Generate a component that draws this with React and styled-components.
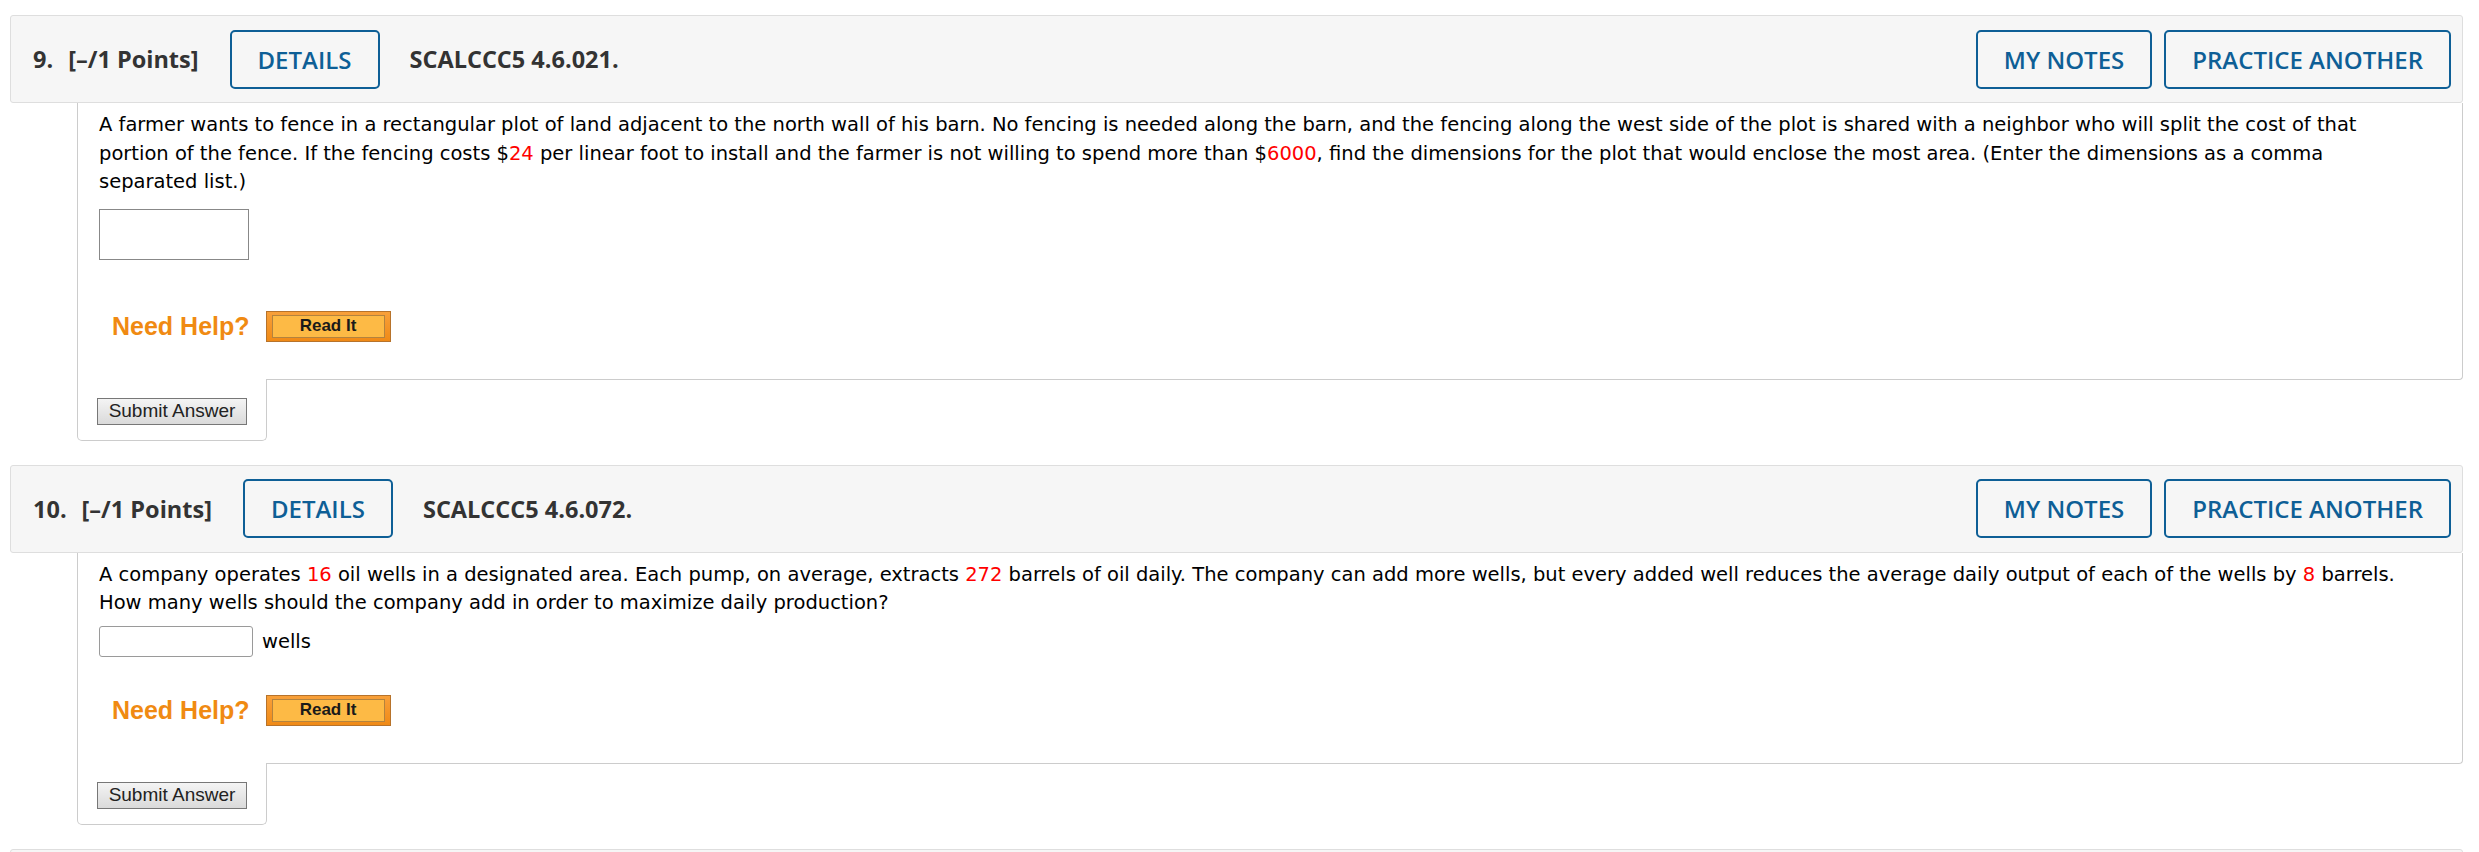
import React from "react";
import styled, {createGlobalStyle} from "styled-components";

const GlobalStyle = createGlobalStyle`
  body {
    margin: 0;
    background: #fff;
    font-family: "DejaVu Sans", Verdana, sans-serif;
  }
`;

const Page = styled.div`
  padding: 15px 16px 0 10px;
`;

const Question = styled.section`
  margin-bottom: 24px;
`;

const Header = styled.div`
  display: flex;
  align-items: center;
  height: 88px;
  box-sizing: border-box;
  padding: 0 11px 0 22px;
  background: #f6f6f6;
  border: 1px solid #dedede;
  border-radius: 3px;
  font-family: "Open Sans", sans-serif;
  font-size: 23.5px;
  color: #333;
`;

const Title = styled.span`
  font-weight: 700;
  margin-right: 31px;
  white-space: nowrap;
`;

const Num = styled.span`
  margin-right: 15px;
`;

const Code = styled.span`
  font-weight: 700;
  margin-left: 30px;
  flex: 1;
`;

const OutlineButton = styled.button`
  height: 59px;
  box-sizing: border-box;
  padding: 0 26px;
  background: transparent;
  border: 2px solid #0e5f96;
  border-radius: 5px;
  color: #0e5f96;
  font-family: "Open Sans", sans-serif;
  font-weight: 600;
  font-size: 24px;
  cursor: pointer;

  & + & {
    margin-left: 12px;
  }
`;

const Panel = styled.div`
  margin-left: 67px;
  padding: 8px 52px 37px 21px;
  border: 1px solid #cccccc;
  border-top: none;
  border-bottom-right-radius: 4px;
`;

const Text = styled.p`
  margin: 0;
  font-size: 19.5px;
  line-height: 28.5px;
  color: #000;
`;

const Red = styled.span`
  color: #ff0000;
`;

const AnswerRow = styled.div`
  display: flex;
  align-items: center;
  gap: 9px;
  margin-top: ${(p) => p.$top}px;
  font-size: 19.5px;
`;

const AnswerBox = styled.input`
  width: ${(p) => p.$w}px;
  height: ${(p) => p.$h}px;
  box-sizing: border-box;
  margin: 0;
  border: 1px solid ${(p) => (p.$tall ? "#888" : "#9a9a9a")};
  border-radius: ${(p) => (p.$tall ? 0 : 3)}px;
  background: #fff;
`;

const HelpRow = styled.div`
  display: flex;
  align-items: center;
  gap: 16px;
  margin-top: ${(p) => p.$top}px;
  padding-left: 13px;
`;

const NeedHelp = styled.span`
  font-family: "Liberation Sans", Arial, sans-serif;
  font-weight: bold;
  font-size: 25px;
  color: #f08a12;
`;

const ReadIt = styled.button`
  width: 125px;
  height: 31px;
  box-sizing: border-box;
  padding: 3px 5px;
  display: flex;
  background: linear-gradient(#f8a03a, #f08a16);
  border: 1px solid #b7732b;
  border-radius: 0;
  cursor: pointer;
`;

const ReadItInner = styled.span`
  flex: 1;
  display: flex;
  align-items: center;
  justify-content: center;
  background: #fdba45;
  border: 1px solid #b4833e;
  font-family: "Liberation Sans", Arial, sans-serif;
  font-weight: bold;
  font-size: 17px;
  color: #1a1a1a;
`;

const SubmitTab = styled.div`
  position: relative;
  width: 190px;
  box-sizing: border-box;
  margin: -1px 0 0 67px;
  padding: 19px 0 15px 19px;
  background: #fff;
  border: 1px solid #cccccc;
  border-top: none;
  border-radius: 0 0 5px 5px;
`;

const SubmitButton = styled.button`
  display: block;
  width: 150px;
  height: 27px;
  padding: 0;
  background: linear-gradient(#f4f4f4, #dadada);
  border: 1px solid #777;
  border-radius: 0;
  font-family: "Liberation Sans", Arial, sans-serif;
  font-size: 19px;
  color: #222;
  cursor: pointer;
`;

function QuestionHeader({num, code}) {
    return (
        <Header>
            <Title><Num>{num}.</Num>[–/1 Points]</Title>
            <OutlineButton>DETAILS</OutlineButton>
            <Code>{code}</Code>
            <OutlineButton>MY NOTES</OutlineButton>
            <OutlineButton>PRACTICE ANOTHER</OutlineButton>
        </Header>
    );
}

function Help({top}) {
    return (
        <HelpRow $top={top}>
            <NeedHelp>Need Help?</NeedHelp>
            <ReadIt><ReadItInner>Read It</ReadItInner></ReadIt>
        </HelpRow>
    );
}

function Submit() {
    return (
        <SubmitTab>
            <SubmitButton>Submit Answer</SubmitButton>
        </SubmitTab>
    );
}

export default function App() {
    return (
        <Page>
            <GlobalStyle />
            <Question>
                <QuestionHeader num="9" code="SCALCCC5 4.6.021." />
                <Panel>
                    <Text>
                        A farmer wants to fence in a rectangular plot of land adjacent to the north wall of his barn. No fencing is needed along the barn, and the fencing along the west side of the plot is shared with a neighbor who will split the cost of that portion of the fence. If the fencing costs $<Red>24</Red> per linear foot to install and the farmer is not willing to spend more than $<Red>6000</Red>, find the dimensions for the plot that would enclose the most area. (Enter the dimensions as a comma separated list.)
                    </Text>
                    <AnswerRow $top={12}>
                        <AnswerBox $w={150} $h={51} $tall />
                    </AnswerRow>
                    <Help top={51} />
                </Panel>
                <Submit />
            </Question>
            <Question>
                <QuestionHeader num="10" code="SCALCCC5 4.6.072." />
                <Panel>
                    <Text>
                        A company operates <Red>16</Red> oil wells in a designated area. Each pump, on average, extracts <Red>272</Red> barrels of oil daily. The company can add more wells, but every added well reduces the average daily output of each of the wells by <Red>8</Red> barrels. How many wells should the company add in order to maximize daily production?
                    </Text>
                    <AnswerRow $top={8}>
                        <AnswerBox $w={154} $h={31} />
                        wells
                    </AnswerRow>
                    <Help top={38} />
                </Panel>
                <Submit />
            </Question>
            <Header />
        </Page>
    );
}
